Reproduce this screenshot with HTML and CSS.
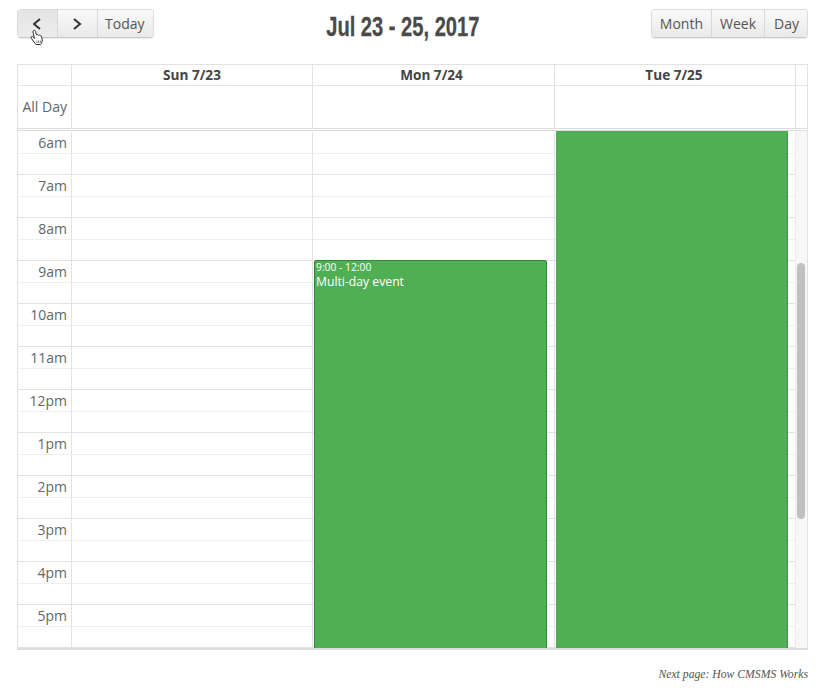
FILE: index.html
```html
<!DOCTYPE html>
<html lang="en">
<head>
<meta charset="utf-8">
<title>Calendar</title>
<link rel="stylesheet" href="styles.css">
</head>
<body>
<main class="page">
  <header class="toolbar">
    <div class="btn-group">
      <button class="btn btn-nav btn-prev active"><svg width="10" height="12" viewBox="0 0 10 12"><path d="M7 1 1 6l6 5" fill="none" stroke="#333" stroke-width="2"/></svg></button>
      <button class="btn btn-nav"><svg width="10" height="12" viewBox="0 0 10 12"><path d="M1 1l6 5-6 5" fill="none" stroke="#333" stroke-width="2"/></svg></button>
      <button class="btn btn-today">Today</button>
    </div>
    <div class="title-wrap"><h1 class="title">Jul 23 - 25, 2017</h1></div>
    <div class="btn-group">
      <button class="btn">Month</button>
      <button class="btn">Week</button>
      <button class="btn btn-day">Day</button>
    </div>
    <svg class="cursor" width="14" height="17" viewBox="0 0 14 17"><path d="M3.500 1.500c1-.8 1.800 0 2 1l1 3.500c.5-.6 1.500-.5 1.800.3.500-.5 1.500-.3 1.700.5.600-.3 1.500 0 1.700 1l.5 3.200c.2 1.500-.5 3-1.500 4.500H6L2.500 11 1 8.500c-.2-1 1-1.500 1.800-.8L4.500 9.500 3 3c-.1-.7 0-1.200.5-1.500z" fill="#fff" stroke="#333" stroke-width="1"/><path d="M7 11.500v2.500M8.700 11.500v2.500M10.400 11.500v2.500" stroke="#555" stroke-width=".7"/></svg>
  </header>

  <section class="calendar">
    <div class="row head-row">
      <div class="cell gutter"></div>
      <div class="cell day-head">Sun 7/23</div>
      <div class="cell day-head day-head-mon">Mon 7/24</div>
      <div class="cell day-head day-head-tue">Tue 7/25</div>
      <div class="cell end"></div>
    </div>
    <div class="row allday-row">
      <div class="cell gutter label">All Day</div>
      <div class="cell"></div>
      <div class="cell"></div>
      <div class="cell"></div>
      <div class="cell end"></div>
    </div>
    <div class="time-body">
      <div class="row hour"><div class="cell gutter label">6am</div><div class="cell"></div><div class="cell"></div><div class="cell"></div><div class="cell stub"></div></div>
      <div class="row hour"><div class="cell gutter label">7am</div><div class="cell"></div><div class="cell"></div><div class="cell"></div><div class="cell stub"></div></div>
      <div class="row hour"><div class="cell gutter label">8am</div><div class="cell"></div><div class="cell"></div><div class="cell"></div><div class="cell stub"></div></div>
      <div class="row hour"><div class="cell gutter label">9am</div><div class="cell"></div><div class="cell"></div><div class="cell"></div><div class="cell stub"></div></div>
      <div class="row hour"><div class="cell gutter label">10am</div><div class="cell"></div><div class="cell"></div><div class="cell"></div><div class="cell stub"></div></div>
      <div class="row hour"><div class="cell gutter label">11am</div><div class="cell"></div><div class="cell"></div><div class="cell"></div><div class="cell stub"></div></div>
      <div class="row hour"><div class="cell gutter label">12pm</div><div class="cell"></div><div class="cell"></div><div class="cell"></div><div class="cell stub"></div></div>
      <div class="row hour"><div class="cell gutter label">1pm</div><div class="cell"></div><div class="cell"></div><div class="cell"></div><div class="cell stub"></div></div>
      <div class="row hour"><div class="cell gutter label">2pm</div><div class="cell"></div><div class="cell"></div><div class="cell"></div><div class="cell stub"></div></div>
      <div class="row hour"><div class="cell gutter label">3pm</div><div class="cell"></div><div class="cell"></div><div class="cell"></div><div class="cell stub"></div></div>
      <div class="row hour"><div class="cell gutter label">4pm</div><div class="cell"></div><div class="cell"></div><div class="cell"></div><div class="cell stub"></div></div>
      <div class="row hour"><div class="cell gutter label">5pm</div><div class="cell"></div><div class="cell"></div><div class="cell"></div><div class="cell stub"></div></div>
      <div class="event event-mon"><div class="event-time">9:00 - 12:00</div><div class="event-title">Multi-day event</div></div>
      <div class="event event-tue"></div>
      <div class="scrollbar"><div class="thumb"></div></div>
    </div>
  </section>

  <footer class="next">Next page: How CMSMS Works</footer>
</main>
</body>
</html>
```
FILE: styles.css
```css
* { box-sizing: border-box; }
html, body { margin: 0; height: 100%; background: #fff; overflow: hidden; }
body { font-family: "Open Sans", "Liberation Sans", sans-serif; color: #555; }

.page { width: 821px; padding: 9px 13px 0 17px; }

.toolbar { position: relative; display: flex; justify-content: space-between; align-items: flex-start; height: 55px; }
.btn-group { display: flex; height: 29px; border: 1px solid #dcdcdc; border-bottom-color: #c8c8c8; border-radius: 4px; overflow: hidden; box-shadow: 0 1px 1px rgba(0,0,0,.08); }
.btn { display: flex; align-items: center; justify-content: center; padding: 0 8px; margin: 0; border: 0; border-left: 1px solid #d8d8d8; background: linear-gradient(#fafafa, #e9e9e9); font: 14px "Open Sans", sans-serif; color: #555; }
.btn:first-child { border-left: 0; }
.btn-nav { width: 40px; padding: 0; }
.btn-prev { width: 39px; }
.btn-today { padding: 0 8px 0 7px; }
.btn-day { padding: 0 8px 0 9px; }
.btn.active { background: linear-gradient(#e4e4e4, #ececec); }
.title-wrap { position: absolute; left: 0; right: 0; top: 3px; display: flex; justify-content: center; pointer-events: none; }
.title { margin: 0 0 0 -19px; transform: scaleX(.745); white-space: nowrap; font: 700 27px/30px "Liberation Sans", sans-serif; color: #4a4a4a; -webkit-text-stroke: .3px #4a4a4a; }
.cursor { position: absolute; left: 13px; top: 20px; }

.calendar { width: 791px; border: 1px solid #e2e2e2; border-bottom: 2px solid #dcdcdc; }
.row { display: grid; grid-template-columns: 53px 241px 242px 241px 12px; }
.cell { border-left: 1px solid #e2e2e2; min-width: 0; }
.cell:first-child { border-left: 0; }
.head-row { height: 21px; border-bottom: 1px solid #e6e6e6; }
.day-head { text-align: center; font-weight: 700; font-size: 13.6px; line-height: 20px; color: #444; }
.day-head-mon { padding-right: 4px; }
.day-head-tue { padding-right: 2px; }
.allday-row { height: 45px; border-bottom: 3px double #dcdcdc; }
.allday-row .label { line-height: 42px; }
.label { text-align: right; padding-right: 4px; font-size: 14px; color: #666; }

.time-body { position: relative; height: 517px; overflow: hidden; padding-top: 1px; }
.hour { height: 43px; border-bottom: 1px solid #e2e2e2; background: linear-gradient(#fff 21px, #efefef 21px, #efefef 22px, #fff 22px); }
.hour .label { line-height: 21px; }
.stub { background: transparent; }

.event { position: absolute; background: #50ae54; color: #fff; }
.event-mon { left: 296px; top: 129px; bottom: -3px; width: 233px; border: 1px solid #2f8a35; border-radius: 2px; padding: 0 1px; }
.event-tue { left: 538px; top: 0; bottom: -3px; width: 232px; border-right: 1px solid #3d9642; }
.event-time { font-size: 10.300px; line-height: 13px; }
.event-title { font-size: 12.200px; line-height: 16px; }

.scrollbar { position: absolute; right: 0; top: 0; bottom: 0; width: 12px; background: #f7f7f7; border-left: 1px solid #eaeaea; }
.thumb { position: absolute; left: 1px; top: 132px; width: 8px; height: 256px; background: #c0c0c0; border-radius: 4px; }

.next { margin-top: 18px; text-align: right; font: italic 11.700px/14px "Liberation Serif", serif; color: #555; }
```
